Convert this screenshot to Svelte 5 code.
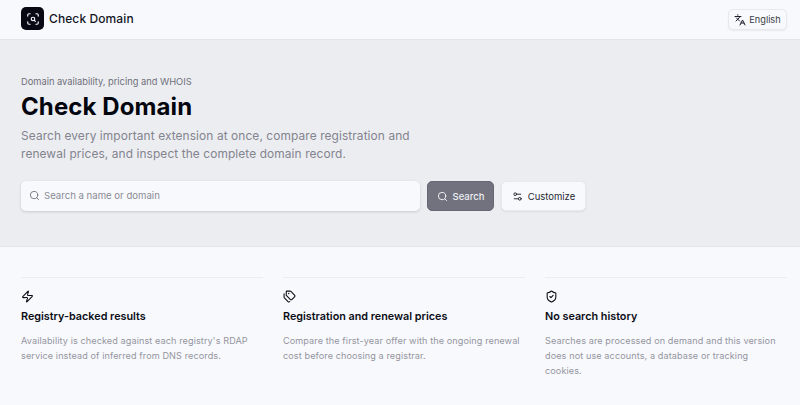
<script>
  const features = [
    { icon: 'bolt', title: 'Registry-backed results', text: "Availability is checked against each registry's RDAP service instead of inferred from DNS records." },
    { icon: 'tag', title: 'Registration and renewal prices', text: 'Compare the first-year offer with the ongoing renewal cost before choosing a registrar.' },
    { icon: 'shield', title: 'No search history', text: 'Searches are processed on demand and this version does not use accounts, a database or tracking cookies.' }
  ];
</script>

<div class="page">
  <header class="top">
    <div class="brand">
      <span class="logo">
        <svg viewBox="0 0 24 24" width="14" height="14" fill="none" stroke="#f8f9fd" stroke-width="2" stroke-linecap="round" stroke-linejoin="round">
          <path d="M3 7V5a2 2 0 0 1 2-2h2M17 3h2a2 2 0 0 1 2 2v2M21 17v2a2 2 0 0 1-2 2h-2M7 21H5a2 2 0 0 1-2-2v-2" />
          <circle cx="12" cy="12" r="3" />
          <path d="m16 16-1.9-1.9" />
        </svg>
      </span>
      <span class="brand-name">Check Domain</span>
    </div>
    <button class="lang">
      <svg viewBox="0 0 24 24" width="12" height="12" fill="none" stroke="#1c1f2a" stroke-width="2" stroke-linecap="round" stroke-linejoin="round">
        <path d="m5 8 6 6M4 14l6-6 2-3M2 5h12M7 2h1M22 22l-5-10-5 10M14 18h6" />
      </svg>
      English
    </button>
  </header>

  <section class="hero">
    <p class="eyebrow">Domain availability, pricing and WHOIS</p>
    <h1>Check Domain</h1>
    <p class="lead">Search every important extension at once, compare registration and renewal prices, and inspect the complete domain record.</p>
    <div class="search-row">
      <div class="input">
        <svg viewBox="0 0 24 24" width="11" height="11" fill="none" stroke="#71727c" stroke-width="2" stroke-linecap="round" stroke-linejoin="round">
          <circle cx="11" cy="11" r="8" /><path d="m21 21-4.3-4.3" />
        </svg>
        <span>Search a name or domain</span>
      </div>
      <button class="search">
        <svg viewBox="0 0 24 24" width="11" height="11" fill="none" stroke="#f8f9fd" stroke-width="2" stroke-linecap="round" stroke-linejoin="round">
          <circle cx="11" cy="11" r="8" /><path d="m21 21-4.3-4.3" />
        </svg>
        Search
      </button>
      <button class="customize">
        <svg viewBox="0 0 24 24" width="11" height="11" fill="none" stroke="#1c1f2a" stroke-width="2" stroke-linecap="round" stroke-linejoin="round">
          <path d="M14 17H5M19 7h-9" /><circle cx="17" cy="17" r="3" /><circle cx="7" cy="7" r="3" />
        </svg>
        Customize
      </button>
    </div>
  </section>

  <section class="features">
    {#each features as f}
      <article class="feature">
        <svg class="ficon" viewBox="0 0 24 24" width="13" height="13" fill="none" stroke="#0b0d16" stroke-width="2" stroke-linecap="round" stroke-linejoin="round">
          {#if f.icon === 'bolt'}
            <path d="M4 14a1 1 0 0 1-.78-1.63l9.9-10.2a.5.5 0 0 1 .86.46l-1.92 6.02A1 1 0 0 0 13 10h7a1 1 0 0 1 .78 1.63l-9.9 10.2a.5.5 0 0 1-.86-.46l1.92-6.02A1 1 0 0 0 11 14z" />
          {:else if f.icon === 'tag'}
            <path d="M13.172 2a2 2 0 0 1 1.414.586l6.71 6.71a2.4 2.4 0 0 1 0 3.408l-4.592 4.592a2.4 2.4 0 0 1-3.408 0l-6.71-6.71A2 2 0 0 1 6 9.172V3a1 1 0 0 1 1-1z" />
            <path d="M2 7v6.172a2 2 0 0 0 .586 1.414l6.71 6.71a2.4 2.4 0 0 0 3.191.193" />
            <circle cx="10.5" cy="6.5" r=".5" fill="#0b0d16" />
          {:else}
            <path d="M20 13c0 5-3.5 7.5-7.66 8.95a1 1 0 0 1-.67-.01C7.5 20.5 4 18 4 13V6a1 1 0 0 1 1-1c2 0 4.5-1.2 6.24-2.72a1.17 1.17 0 0 1 1.52 0C14.51 3.81 17 5 19 5a1 1 0 0 1 1 1z" />
            <path d="m9 12 2 2 4-4" />
          {/if}
        </svg>
        <h2>{f.title}</h2>
        <p>{f.text}</p>
      </article>
    {/each}
  </section>
</div>

<style>
  :global(body) {
    margin: 0;
    background: #f8f9fd;
  }
  .page {
    font-family: Inter, "Open Sans", sans-serif;
    color: #0b0d16;
    height: 405px;
    overflow: hidden;
    background: #f8f9fd;
  }
  button {
    font-family: inherit;
    cursor: pointer;
  }
  .top {
    height: 39px;
    box-sizing: border-box;
    display: flex;
    align-items: center;
    justify-content: space-between;
    padding: 0 13px 2px 21px;
  }
  .brand {
    display: flex;
    align-items: center;
    gap: 5px;
  }
  .logo {
    width: 23px;
    height: 23px;
    border-radius: 5px;
    background: #080912;
    display: flex;
    align-items: center;
    justify-content: center;
  }
  .brand-name {
    font-size: 12px;
    font-weight: 500;
    letter-spacing: 0.1px;
    color: #14161f;
  }
  .lang {
    height: 21px;
    width: 59px;
    margin-top: 2px;
    padding: 0;
    display: flex;
    align-items: center;
    justify-content: center;
    gap: 3px;
    font-size: 9.2px;
    font-weight: 400;
    color: #3a3c46;
    background: #f8f9fd;
    border: 1px solid #e8e9ee;
    border-radius: 5px;
    box-shadow: 0 1px 2px rgba(20, 22, 40, 0.06);
  }
  .hero {
    height: 208px;
    box-sizing: border-box;
    background: #ecedf1;
    border-top: 1px solid #e4e5ea;
    border-bottom: 1px solid #e3e4e9;
    padding: 36px 21px 0;
  }
  .eyebrow {
    margin: 0;
    font-size: 9.3px;
    line-height: 12px;
    font-weight: 400;
    color: #6f707a;
  }
  h1 {
    margin: 3px 0 0;
    font-size: 24px;
    line-height: 32px;
    font-weight: 700;
    letter-spacing: 0.1px;
    color: #04060f;
  }
  .lead {
    margin: 4px 0 0;
    width: 400px;
    font-size: 11.9px;
    line-height: 18px;
    letter-spacing: 0.1px;
    color: #83848e;
  }
  .search-row {
    margin-top: 18px;
    display: flex;
    gap: 7px;
    height: 30px;
  }
  .input {
    width: 399px;
    box-sizing: border-box;
    display: flex;
    align-items: center;
    gap: 4px;
    padding: 0 0 1px 8px;
    font-size: 9.6px;
    color: #8a8b94;
    background: #f8f9fd;
    border-radius: 5px;
    box-shadow: 0 1px 3px rgba(20, 22, 40, 0.16);
  }
  .search {
    width: 67px;
    padding: 0;
    display: flex;
    align-items: center;
    justify-content: center;
    gap: 5px;
    font-size: 9.5px;
    font-weight: 500;
    color: #eceef3;
    background: #71727d;
    border: 1px solid #666772;
    border-radius: 5px;
  }
  .customize {
    width: 85px;
    padding: 0;
    display: flex;
    align-items: center;
    justify-content: center;
    gap: 5px;
    font-size: 9.5px;
    font-weight: 400;
    color: #272933;
    background: #f8f9fd;
    border: 1px solid #e8e9ee;
    border-radius: 5px;
    box-shadow: 0 1px 2px rgba(20, 22, 40, 0.08);
  }
  .features {
    display: grid;
    grid-template-columns: repeat(3, 242px);
    gap: 20px;
    padding: 30px 21px 0 21px;
  }
  .feature {
    border-top: 1px solid #ecedf1;
    padding-top: 12px;
  }
  .ficon {
    display: block;
  }
  h2 {
    margin: 6px 0 0;
    font-size: 10.8px;
    line-height: 16px;
    font-weight: 600;
    color: #0b0d16;
  }
  .feature p {
    margin: 8px 0 0;
    padding-right: 4px;
    font-size: 9.1px;
    line-height: 15px;
    letter-spacing: 0.1px;
    color: #94959e;
  }
</style>
